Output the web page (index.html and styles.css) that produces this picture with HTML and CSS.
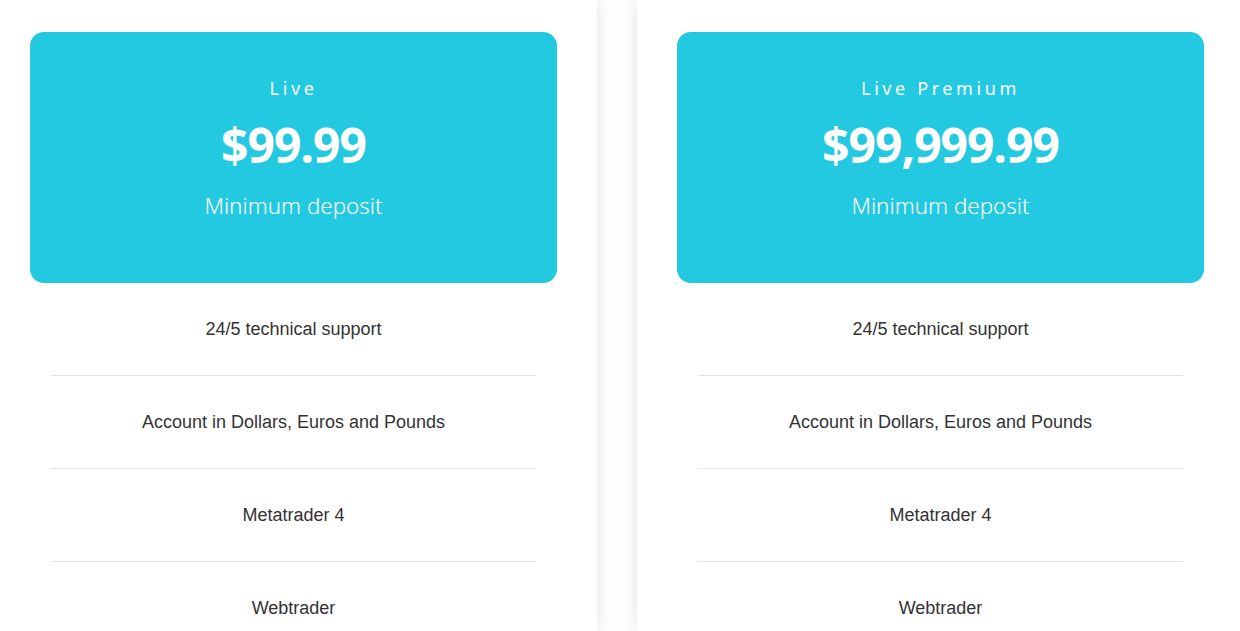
FILE: index.html
```html
<!DOCTYPE html>
<html lang="en">
<head>
<meta charset="utf-8">
<title>Account types</title>
<link rel="stylesheet" href="styles.css">
</head>
<body>
<div class="plans">
  <section class="card">
    <div class="head">
      <div class="name">Live</div>
      <div class="price">$99.99</div>
      <div class="sub">Minimum deposit</div>
    </div>
    <ul class="features">
      <li>24/5 technical support</li>
      <li>Account in Dollars, Euros and Pounds</li>
      <li>Metatrader 4</li>
      <li>Webtrader</li>
    </ul>
  </section>
  <section class="card">
    <div class="head">
      <div class="name">Live Premium</div>
      <div class="price">$99,999.99</div>
      <div class="sub">Minimum deposit</div>
    </div>
    <ul class="features">
      <li>24/5 technical support</li>
      <li>Account in Dollars, Euros and Pounds</li>
      <li>Metatrader 4</li>
      <li>Webtrader</li>
    </ul>
  </section>
</div>
</body>
</html>
```
FILE: styles.css
```css
html, body {
  margin: 0;
  padding: 0;
  background: #ffffff;
  overflow: hidden;
}
.plans {
  display: flex;
  gap: 40px;
  margin-left: -10px;
}
.card {
  flex: 0 0 607px;
  box-sizing: border-box;
  padding: 32px 40px 0;
  background: #fff;
  box-shadow: 0 0 18px rgba(0, 0, 0, 0.12);
  height: 631px;
}
.head {
  box-sizing: border-box;
  height: 251px;
  padding-top: 44px;
  background: #23c9e1;
  border-radius: 14px;
  color: #fff;
  text-align: center;
  font-family: "Noto Sans", "Open Sans", sans-serif;
}
.name {
  font-size: 18px;
  line-height: 24px;
  letter-spacing: 3.6px;
  font-weight: 400;
}
.price {
  margin-top: 17px;
  font-size: 48px;
  line-height: 56px;
  font-weight: 700;
  letter-spacing: -1px;
}
.sub {
  margin-top: 17px;
  font-size: 22.4px;
  line-height: 32px;
  font-weight: 300;
}
.features {
  list-style: none;
  margin: 0 21px;
  padding: 0;
  font-family: "Liberation Sans", Arial, sans-serif;
  font-size: 18px;
  color: #333;
  text-align: center;
}
.features li {
  padding: 36px 0;
  line-height: 20px;
  border-bottom: 1px solid #e3e3e3;
}
```
